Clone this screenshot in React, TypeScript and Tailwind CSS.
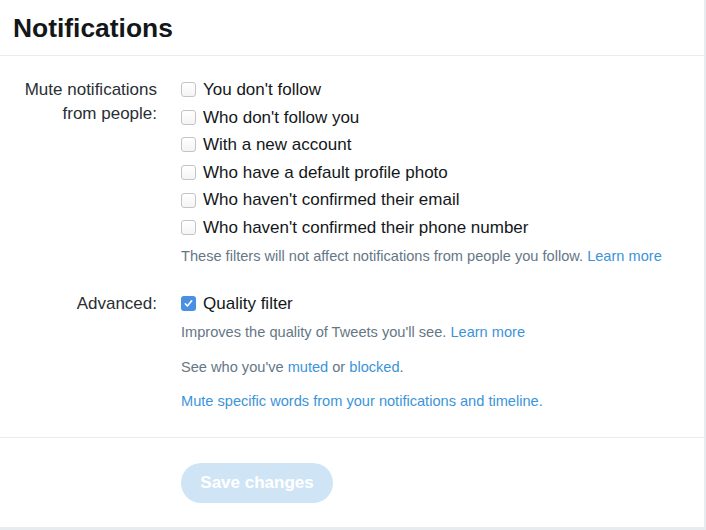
import React from "react";

const options = [
  { label: "You don't follow", checked: false },
  { label: "Who don't follow you", checked: false },
  { label: "With a new account", checked: false },
  { label: "Who have a default profile photo", checked: false },
  { label: "Who haven't confirmed their email", checked: false },
  { label: "Who haven't confirmed their phone number", checked: false },
];

function Box({ checked }: { checked: boolean }) {
  if (checked) {
    return (
      <span className="flex h-[15px] w-[15px] shrink-0 items-center justify-center rounded-[3px] bg-[#4a90e2]">
        <svg width="11" height="11" viewBox="0 0 11 11" fill="none">
          <path d="M2.3 5.8 L4.4 8 L8.7 2.8" stroke="white" strokeWidth="1.6" strokeLinecap="round" strokeLinejoin="round" />
        </svg>
      </span>
    );
  }
  return (
    <span className="h-[15px] w-[15px] shrink-0 rounded-[3px] border border-[#c4c4c4] bg-gradient-to-b from-white to-[#f4f4f4]" />
  );
}

export default function App() {
  return (
    <div
      className="h-[530px] w-[706px] bg-[#e6ecf0]"
      style={{ fontFamily: '"Liberation Sans", Arial, sans-serif' }}
    >
      <div className="h-[527px] w-[704px] bg-white">
        <div className="flex h-[56px] items-center border-b border-[#e6ecf0] pl-[13px] pt-[1px]">
          <h1 className="text-[26.4px] font-bold leading-none text-[#14171a]">Notifications</h1>
        </div>

        <div className="pt-[20px]">
          <div className="flex gap-[24px]">
            <div className="w-[157px] shrink-0 pt-[2px] text-right text-[17px] leading-[24px] text-[#292f33]">
              Mute notifications
              <br />
              from people:
            </div>
            <div className="flex flex-col">
              {options.map((o) => (
                <label key={o.label} className="flex h-[27.6px] items-center gap-[7px] text-[17px] text-[#14171a]">
                  <Box checked={o.checked} />
                  <span>{o.label}</span>
                </label>
              ))}
              <p className="mt-[4px] text-[14.6px] leading-[20px] text-[#657786]">
                These filters will not affect notifications from people you follow.{" "}
                <span className="text-[#3b94d9]">Learn more</span>
              </p>
            </div>
          </div>

          <div className="mt-[24px] flex gap-[24px]">
            <div className="w-[157px] shrink-0 text-right text-[17px] leading-[27.6px] text-[#292f33]">
              Advanced:
            </div>
            <div className="flex flex-col">
              <label className="flex h-[27.6px] items-center gap-[7px] text-[17px] text-[#14171a]">
                <Box checked />
                <span>Quality filter</span>
              </label>
              <p className="mt-[5px] text-[14.6px] leading-[20px] text-[#657786]">
                Improves the quality of Tweets you'll see.{" "}
                <span className="text-[#3b94d9]">Learn more</span>
              </p>
              <p className="mt-[15px] text-[14.6px] leading-[20px] text-[#657786]">
                See who you've <span className="text-[#3b94d9]">muted</span> or{" "}
                <span className="text-[#3b94d9]">blocked</span>.
              </p>
              <p className="mt-[14px] text-[14.6px] leading-[20px] text-[#3b94d9]">
                Mute specific words from your notifications and timeline.
              </p>
            </div>
          </div>
        </div>

        <div className="mt-[26px] border-t border-[#e6ecf0] pl-[181px] pt-[25px]">
          <button className="h-[40px] w-[152px] rounded-full bg-[#cfe5f6] text-[17px] font-bold text-white">
            Save changes
          </button>
        </div>
      </div>
    </div>
  );
}
